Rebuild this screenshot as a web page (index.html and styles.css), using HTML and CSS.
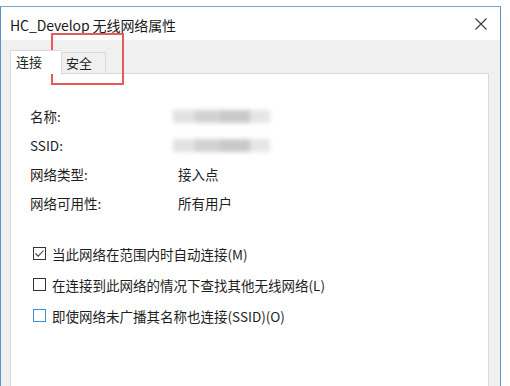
FILE: index.html
```html
<!DOCTYPE html>
<html>
<head>
<meta charset="utf-8">
<link rel="stylesheet" href="styles.css">
</head>
<body>
<div class="window">
  <div class="titlebar">
    <span class="title">HC_Develop 无线网络属性</span>
    <svg class="close" width="12" height="12" viewBox="0 0 12 12"><path d="M0.5 0.5 L11.5 11.5 M11.5 0.5 L0.5 11.5" stroke="#3a3a3a" stroke-width="1.1" fill="none"/></svg>
  </div>
  <div class="body">
    <div class="tabs">
      <div class="tab active">连接</div>
      <div class="tab">安全</div>
    </div>
    <div class="panel">
      <div class="props">
        <div class="row"><span class="label">名称:</span><span class="blur"><i class="b1"></i><i class="b2"></i><i class="b3"></i><i class="b4"></i></span></div>
        <div class="row"><span class="label">SSID:</span><span class="blur"><i class="b1"></i><i class="b2"></i><i class="b3"></i><i class="b4"></i></span></div>
        <div class="row"><span class="label">网络类型:</span><span class="value">接入点</span></div>
        <div class="row"><span class="label">网络可用性:</span><span class="value">所有用户</span></div>
      </div>
      <div class="checks">
        <div class="check"><span class="box"><svg width="11" height="11" viewBox="0 0 11 11"><path d="M1.5 5.5 L4.2 8.2 L9.5 2.5" stroke="#444" stroke-width="1.1" fill="none"/></svg></span><span>当此网络在范围内时自动连接(M)</span></div>
        <div class="check"><span class="box"></span><span>在连接到此网络的情况下查找其他无线网络(L)</span></div>
        <div class="check"><span class="box focus"></span><span>即使网络未广播其名称也连接(SSID)(O)</span></div>
      </div>
    </div>
  </div>
</div>
<div class="highlight"></div>
</body>
</html>
```
FILE: styles.css
```css
html, body {
  margin: 0;
  padding: 0;
  background: #ffffff;
  overflow: hidden;
}
body {
  width: 510px;
  height: 386px;
  position: relative;
  font-family: "Noto Sans CJK SC", "Noto Sans", sans-serif;
  color: #1e1e1e;
}
.window {
  margin-top: 6px;
  width: 501px;
  height: 380px;
  border-top: 1px solid #7ea6c9;
  border-left: 1px solid #5b93c2;
  border-right: 1px solid #5b93c2;
  box-sizing: border-box;
  display: flex;
  flex-direction: column;
}
.titlebar {
  height: 33px;
  flex: none;
  display: flex;
  align-items: center;
  justify-content: space-between;
  padding: 0 13px 0 9px;
  background: #fff;
}
.title {
  font-size: 14px;
  letter-spacing: -0.1px;
  color: #1a1a1a;
  margin-top: 2px;
}
.close {
  display: block;
}
.body {
  flex: 1;
  background: #f0f0f0;
  padding: 10px 11px 0 9px;
  display: flex;
  flex-direction: column;
}
.tabs {
  display: flex;
  align-items: flex-end;
  height: 23px;
  flex: none;
  position: relative;
  z-index: 1;
}
.tab {
  font-size: 13px;
  white-space: nowrap;
  height: 21px;
  line-height: 20px;
  padding: 0 0 0 4px;
  border: 1px solid #d9d9d9;
  border-bottom: none;
  background: #f0f0f0;
  box-sizing: border-box;
  width: 45px;
}
.tab.active {
  height: 24px;
  line-height: 22px;
  background: #fff;
  width: 51px;
  padding-left: 5px;
  margin-bottom: -1px;
  border-right: none;
}
.panel {
  flex: 1;
  background: #fff;
  border: 1px solid #d9d9d9;
  border-bottom: none;
  padding: 27px 0 0 19px;
  font-size: 13.5px;
}
.props {
  display: flex;
  flex-direction: column;
}
.row {
  height: 29px;
  display: flex;
  align-items: center;
}
.label {
  width: 148px;
}
.value {
  color: #1e1e1e;
}
.blur {
  position: relative;
  width: 97px;
  height: 18px;
  display: block;
  filter: blur(2px);
  margin-left: -5px;
}
.blur i {
  position: absolute;
  top: 3px;
  height: 13px;
  background: #dcdcdc;
}
.blur .b1 { left: 0; width: 22px; background: #e2e2e2; }
.blur .b2 { left: 22px; width: 25px; background: #d2d2d2; }
.blur .b3 { left: 47px; width: 30px; background: #c9c9c9; }
.blur .b4 { left: 77px; width: 20px; background: #e6e6e6; }
.checks {
  margin-top: 21px;
  display: flex;
  flex-direction: column;
}
.check {
  height: 31px;
  display: flex;
  align-items: center;
  margin-left: 3px;
}
.box {
  width: 13px;
  height: 13px;
  border: 1px solid #333;
  box-sizing: border-box;
  margin-right: 6px;
  display: flex;
  align-items: center;
  justify-content: center;
  flex: none;
}
.box svg { display: block; }
.box.focus {
  border-color: #3c8fe0;
}
.highlight {
  position: absolute;
  left: 51px;
  top: 33px;
  width: 73px;
  height: 52px;
  border: 2px solid #e65a5c;
  box-sizing: border-box;
}
```
